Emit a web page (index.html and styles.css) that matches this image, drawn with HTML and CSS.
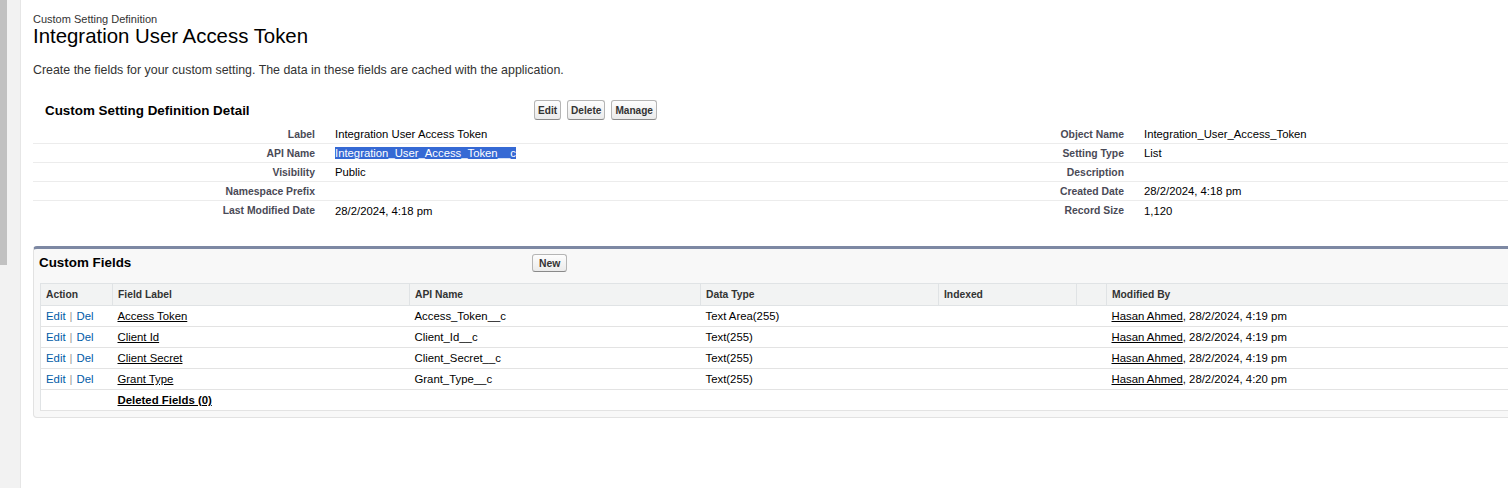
FILE: index.html
```html
<!DOCTYPE html>
<html lang="en">
<head>
<meta charset="utf-8">
<title>Integration User Access Token</title>
<link rel="stylesheet" href="styles.css">
</head>
<body>
<div class="page">
  <aside class="rail"><div class="thumb"></div></aside>
  <main class="content">
    <div class="ptype">Custom Setting Definition</div>
    <h1 class="ptitle">Integration User Access Token</h1>
    <p class="desc">Create the fields for your custom setting. The data in these fields are cached with the application.</p>

    <section class="detail">
      <div class="dhead">
        <h2 class="dtitle">Custom Setting Definition Detail</h2>
        <div class="btns">
          <button class="btn">Edit</button>
          <button class="btn">Delete</button>
          <button class="btn">Manage</button>
        </div>
      </div>
      <div class="drow">
        <span class="lab">Label</span><span class="val">Integration User Access Token</span>
        <span class="lab">Object Name</span><span class="val">Integration_User_Access_Token</span>
      </div>
      <div class="drow">
        <span class="lab">API Name</span><span class="val"><span class="sel">Integration_User_Access_Token__c</span></span>
        <span class="lab">Setting Type</span><span class="val">List</span>
      </div>
      <div class="drow">
        <span class="lab">Visibility</span><span class="val">Public</span>
        <span class="lab">Description</span><span class="val"></span>
      </div>
      <div class="drow">
        <span class="lab">Namespace Prefix</span><span class="val"></span>
        <span class="lab">Created Date</span><span class="val">28/2/2024, 4:18 pm</span>
      </div>
      <div class="drow">
        <span class="lab">Last Modified Date</span><span class="val">28/2/2024, 4:18 pm</span>
        <span class="lab">Record Size</span><span class="val">1,120</span>
      </div>
    </section>

    <section class="panel">
      <div class="phead">
        <h2 class="ptitle2">Custom Fields</h2>
        <button class="btn small">New</button>
      </div>
      <table class="list">
        <colgroup>
          <col class="c1"><col class="c2"><col class="c3"><col class="c4"><col class="c5"><col class="c6"><col>
        </colgroup>
        <thead>
          <tr><th>Action</th><th>Field Label</th><th>API Name</th><th>Data Type</th><th>Indexed</th><th></th><th>Modified By</th></tr>
        </thead>
        <tbody>
          <tr>
            <td class="act"><a href="#">Edit</a><span class="sep">|</span><a href="#">Del</a></td>
            <td><a class="ul" href="#">Access Token</a></td>
            <td>Access_Token__c</td><td>Text Area(255)</td><td></td><td></td>
            <td><a class="ul" href="#">Hasan Ahmed</a>, 28/2/2024, 4:19 pm</td>
          </tr>
          <tr>
            <td class="act"><a href="#">Edit</a><span class="sep">|</span><a href="#">Del</a></td>
            <td><a class="ul" href="#">Client Id</a></td>
            <td>Client_Id__c</td><td>Text(255)</td><td></td><td></td>
            <td><a class="ul" href="#">Hasan Ahmed</a>, 28/2/2024, 4:19 pm</td>
          </tr>
          <tr>
            <td class="act"><a href="#">Edit</a><span class="sep">|</span><a href="#">Del</a></td>
            <td><a class="ul" href="#">Client Secret</a></td>
            <td>Client_Secret__c</td><td>Text(255)</td><td></td><td></td>
            <td><a class="ul" href="#">Hasan Ahmed</a>, 28/2/2024, 4:19 pm</td>
          </tr>
          <tr>
            <td class="act"><a href="#">Edit</a><span class="sep">|</span><a href="#">Del</a></td>
            <td><a class="ul" href="#">Grant Type</a></td>
            <td>Grant_Type__c</td><td>Text(255)</td><td></td><td></td>
            <td><a class="ul" href="#">Hasan Ahmed</a>, 28/2/2024, 4:20 pm</td>
          </tr>
          <tr>
            <td></td>
            <td><a class="ul bold" href="#">Deleted Fields (0)</a></td>
            <td></td><td></td><td></td><td></td><td></td>
          </tr>
        </tbody>
      </table>
    </section>
  </main>
</div>
</body>
</html>
```

FILE: styles.css
```css
* { box-sizing: border-box; margin: 0; padding: 0; }
html, body { height: 100%; }
body {
  font-family: "Liberation Sans", Arial, sans-serif;
  color: #000;
  background: #fff;
  overflow: hidden;
}
.page { display: flex; height: 488px; }
.rail {
  width: 21px;
  flex: none;
  background: #f2f2f2;
  border-right: 1px solid #e6e6e6;
}
.thumb { width: 7px; height: 265px; background: #c1c1c1; }
.content { flex: 1; min-width: 0; padding: 13px 0 0 12px; }

.ptype { font-size: 11px; line-height: 12px; color: #333; }
.ptitle { font-size: 20.4px; font-weight: normal; line-height: 22px; color: #000; }
.desc { margin-top: 15px; font-size: 12.4px; line-height: 16px; color: #333; }

.detail { margin-top: 17px; }
.dhead { display: flex; align-items: center; height: 30px; }
.dtitle { width: 501px; flex: none; padding-left: 12px; font-size: 13.4px; font-weight: bold; color: #000; }
.btns { display: flex; gap: 6px; }
.btn {
  font-family: "Liberation Sans", Arial, sans-serif;
  font-size: 10.1px;
  font-weight: bold;
  color: #333;
  height: 20px;
  padding: 0 3px;
  border: 1px solid #b5b5b5;
  border-bottom-color: #8a8a8a;
  border-radius: 3px;
  background: linear-gradient(#fdfdfd, #ebebeb);
}
.btn.small { height: 18px; padding: 0 6px; font-size: 10.4px; }

.drow {
  display: grid;
  grid-template-columns: 292px 629px 180px 1fr;
  align-items: center;
  height: 19px;
  border-bottom: 1px solid #ececec;
}
.drow:first-of-type { height: 20px; padding-top: 1px; }
.drow:last-child { border-bottom: none; }
.lab { text-align: right; padding-right: 10px; font-size: 10.4px; font-weight: bold; color: #4a4a56; }
.val { padding-left: 10px; font-size: 11.3px; color: #000; }
.sel {
  display: inline-block;
  background: #3569d4;
  color: #fff;
  line-height: 12px;
  height: 12px;
}

.panel {
  margin-top: 26px;
  margin-right: -10px;
  background: #f8f8f8;
  border: 1px solid #e2e2e2;
  border-top: 3px solid #7d88a3;
  border-radius: 4px;
  padding: 0 0 6px 0;
}
.phead { display: flex; align-items: center; padding: 5px 0 11px 5px; }
.ptitle2 { width: 493px; flex: none; font-size: 13.4px; font-weight: bold; color: #000; line-height: 18px; }

.list {
  margin-left: 6px;
  width: calc(100% - 6px);
  border-collapse: collapse;
  table-layout: fixed;
  background: #fff;
  border-left: 1px solid #e0e3e5;
}
.c1 { width: 72px; }
.c2 { width: 297px; }
.c3 { width: 291px; }
.c4 { width: 238px; }
.c5 { width: 138px; }
.c6 { width: 30px; }
.list th {
  background: #f2f3f3;
  height: 22px;
  border-top: 1px solid #e0e3e5;
  border-bottom: 1px solid #e0e3e5;
  border-left: 1px solid #e0e3e5;
  font-size: 10.3px;
  font-weight: bold;
  color: #333;
  text-align: left;
  padding: 0 5px;
}
.list th:first-child { border-left: none; }
.list td {
  height: 21px;
  border-bottom: 1px solid #e3e3e3;
  font-size: 11.35px;
  color: #000;
  padding: 0 5px;
  white-space: nowrap;
}
.act a { color: #015ba7; text-decoration: none; }
.sep { color: #999; margin: 0 4px; }
.ul { color: #000; text-decoration: underline; }
.bold { font-weight: bold; font-size: 11.4px; }
```
